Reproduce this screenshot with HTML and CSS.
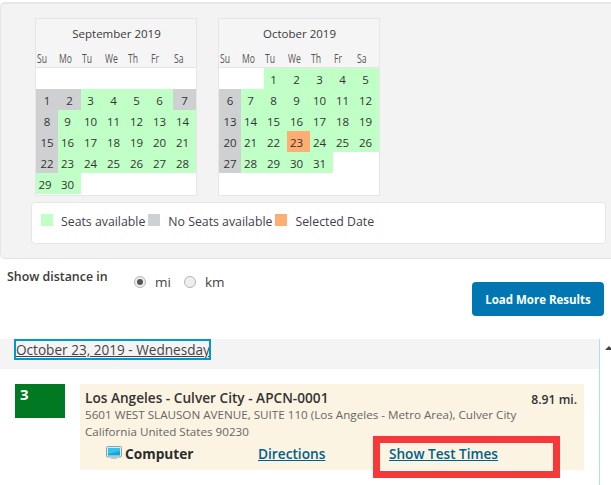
FILE: index.html
```html
<!DOCTYPE html>
<html lang="en">
<head>
<meta charset="utf-8">
<title>Test center results</title>
<link rel="stylesheet" href="styles.css">
</head>
<body>
<section class="panel">
  <div class="calendars">
    <div class="cal">
      <div class="cal-title">September 2019</div>
      <div class="dow"><span>Su</span><span>Mo</span><span>Tu</span><span>We</span><span>Th</span><span>Fr</span><span>Sa</span></div>
      <div class="days">
        <i></i><i></i><i></i><i></i><i></i><i></i><i></i>
        <b class="no">1</b><b class="no">2</b><b class="ok">3</b><b class="ok">4</b><b class="ok">5</b><b class="ok">6</b><b class="no">7</b>
        <b class="no">8</b><b class="ok">9</b><b class="ok">10</b><b class="ok">11</b><b class="ok">12</b><b class="ok">13</b><b class="ok">14</b>
        <b class="no">15</b><b class="ok">16</b><b class="ok">17</b><b class="ok">18</b><b class="ok">19</b><b class="ok">20</b><b class="ok">21</b>
        <b class="no">22</b><b class="ok">23</b><b class="ok">24</b><b class="ok">25</b><b class="ok">26</b><b class="ok">27</b><b class="ok">28</b>
        <b class="ok">29</b><b class="ok">30</b>
      </div>
    </div>
    <div class="cal">
      <div class="cal-title">October 2019</div>
      <div class="dow"><span>Su</span><span>Mo</span><span>Tu</span><span>We</span><span>Th</span><span>Fr</span><span>Sa</span></div>
      <div class="days">
        <i></i><i></i><b class="ok">1</b><b class="ok">2</b><b class="ok">3</b><b class="ok">4</b><b class="ok">5</b>
        <b class="no">6</b><b class="ok">7</b><b class="ok">8</b><b class="ok">9</b><b class="ok">10</b><b class="ok">11</b><b class="ok">12</b>
        <b class="no">13</b><b class="ok">14</b><b class="ok">15</b><b class="ok">16</b><b class="ok">17</b><b class="ok">18</b><b class="ok">19</b>
        <b class="no">20</b><b class="ok">21</b><b class="ok">22</b><b class="sel">23</b><b class="ok">24</b><b class="ok">25</b><b class="ok">26</b>
        <b class="no">27</b><b class="ok">28</b><b class="ok">29</b><b class="ok">30</b><b class="ok">31</b>
      </div>
    </div>
  </div>
  <div class="legend">
    <span class="swatch ok"></span><span class="legend-text">Seats available</span>
    <span class="swatch no"></span><span class="legend-text">No Seats available</span>
    <span class="swatch sel"></span><span class="legend-text">Selected Date</span>
  </div>
</section>

<div class="options">
  <div class="distance-label">Show distance in</div>
  <div class="radios">
    <span class="radio on"></span><span class="radio-text">mi</span>
    <span class="radio"></span><span class="radio-text">km</span>
  </div>
  <button class="load" type="button">Load More Results</button>
</div>

<section class="results">
  <div class="results-main">
    <div class="date-band"><a class="date-link" href="#">October 23, 2019 - Wednesday</a></div>
    <div class="result">
      <div class="rank">3</div>
      <div class="card">
        <div class="card-head">
          <span class="site">Los Angeles - Culver City - APCN-0001</span>
          <span class="miles">8.91 mi.</span>
        </div>
        <div class="addr">5601 WEST SLAUSON AVENUE, SUITE 110 (Los Angeles - Metro Area), Culver City</div>
        <div class="addr">California United States 90230</div>
        <div class="actions">
          <span class="computer">
            <svg class="pc" viewBox="0 0 16 14" width="16" height="14" aria-hidden="true">
              <rect x="0.5" y="0.5" width="15" height="10.5" rx="1" fill="#dfe8ec" stroke="#8aa2ad"/>
              <rect x="2" y="2" width="12" height="7.5" fill="#10a8dc"/>
              <path d="M2 2h12v3L2 8z" fill="#35c3ec"/>
              <path d="M6 11h4l1 2H5z" fill="#b9c6cc"/>
            </svg>Computer</span>
          <a class="act-link directions" href="#">Directions</a>
          <a class="act-link times" href="#">Show Test Times</a>
        </div>
      </div>
    </div>
    <div class="callout"></div>
  </div>
  <div class="scroll"><span class="arrow"></span></div>
</section>
</body>
</html>
```

FILE: styles.css
```css
* { box-sizing: border-box; }
html, body { margin: 0; padding: 0; }
body {
  width: 611px;
  height: 485px;
  overflow: hidden;
  background: #fff;
  color: #333;
  font-family: "Open Sans", "Liberation Sans", sans-serif;
  position: relative;
}
.panel {
  margin-top: 2px;
  height: 257px;
  background: #f3f3f3;
  border-top: 2px solid #e6e6e6;
  border-bottom: 1px solid #e3e3e3;
  border-left: 1px solid #e6e6e6;
  border-radius: 5px 0 0 5px;
  padding: 14px 6px 0 30px;
}
.calendars { display: flex; gap: 21px; padding-left: 4px; }
.cal {
  width: 162px;
  height: 178px;
  background: #fff;
  border: 1px solid #e6e6e6;
}
.cal-title {
  height: 31px;
  background: #f5f5f5;
  text-align: center;
  font-size: 11.5px;
  line-height: 27px;
  padding: 1px 0 0 1px;
  color: #3a3a3a;
}
.dow {
  display: grid;
  grid-template-columns: 22px repeat(6, 23px);
  height: 18px;
  background: #f5f5f5;
  border-bottom: 1px solid #e6e6e6;
  font-size: 12px;
  line-height: 18px;
  color: #555;
}
.dow span {
  padding-left: 1px;
  transform: scaleX(0.72);
  transform-origin: 1px 50%;
}
.days {
  display: grid;
  grid-template-columns: 22px repeat(6, 23px);
  grid-auto-rows: 21px;
}
.days b {
  font-weight: 400;
  font-size: 11.5px;
  line-height: 21px;
  text-align: center;
  color: #333;
  padding-top: 1px;
}
.days .ok, .days .sel { padding-right: 4px; }
.ok { background: #c0ffc6; }
.no { background: #cfd0d2; }
.sel { background: #ffae73; }
.legend {
  margin-top: 6px;
  width: 575px;
  height: 42px;
  background: #fff;
  border: 1px solid #e6e6e6;
  border-radius: 4px;
  display: flex;
  align-items: flex-start;
  padding: 11px 0 0 9px;
  font-size: 12.3px;
  line-height: 17px;
  color: #3f4050;
}
.swatch { width: 12px; height: 12px; flex: none; }
.legend-text { margin: -1px 3px 0 8px; }
.options {
  display: flex;
  align-items: flex-start;
  height: 80px;
  padding: 0 7px;
  position: relative;
}
.distance-label {
  width: 127px;
  padding-top: 9px;
  font-size: 12.4px;
  font-weight: 600;
  line-height: 17px;
  color: #3a3a3a;
}
.radios {
  display: flex;
  align-items: center;
  margin-top: 13px;
  font-size: 13.5px;
  line-height: 18px;
  color: #444;
}
.radio {
  width: 12px;
  height: 12px;
  border-radius: 50%;
  border: 1px solid #b5b5b5;
  background: #eee;
  flex: none;
  display: flex;
  align-items: center;
  justify-content: center;
}
.radio.on::after {
  content: "";
  width: 6px;
  height: 6px;
  border-radius: 50%;
  background: #555;
}
.radio-text { margin: 1px 13px 0 9px; }
.load {
  margin: 23px 0 0 auto;
  width: 132px;
  height: 34px;
  background: #0077b3;
  color: #fff;
  border: 0;
  border-radius: 4px;
  font-family: inherit;
  font-size: 11.5px;
  font-weight: 700;
  padding: 0;
}
.results { display: flex; height: 146px; position: relative; }
.results-main { width: 599px; flex: none; }
.date-band {
  height: 30px;
  background: #f4f4f4;
  padding-left: 14px;
}
.date-link {
  display: inline-block;
  width: 197px;
  height: 21px;
  border: 2px solid #0099cc;
  color: #444;
  font-size: 13.6px;
  line-height: 18px;
  white-space: nowrap;
  overflow: hidden;
}
.result { display: flex; padding: 15px 0 0 15px; }
.rank {
  width: 50px;
  height: 34px;
  background: #007a22;
  color: #fff;
  font-weight: 700;
  font-size: 15px;
  line-height: 20px;
  padding-left: 5px;
  flex: none;
}
.card {
  margin-left: 15px;
  width: 504px;
  height: 86px;
  background: #fbf4e2;
  padding: 5px 7px 0 5px;
}
.card-head { display: flex; justify-content: space-between; height: 17px; }
.site { font-size: 13.65px; font-weight: 600; line-height: 17px; color: #333; }
.miles { font-size: 12.2px; font-weight: 600; line-height: 17px; margin-top: 2px; color: #333; }
.addr { font-size: 11.65px; line-height: 17px; color: #666; white-space: nowrap; }
.actions { display: flex; align-items: center; height: 20px; margin-top: 3px; }
.computer {
  display: flex;
  align-items: center;
  gap: 3px;
  width: 153px;
  padding-left: 21px;
  font-size: 13.7px;
  font-weight: 700;
  color: #2c2c2c;
}
.pc { flex: none; }
.act-link {
  color: #005f8c;
  font-size: 13.7px;
  font-weight: 600;
  text-decoration: underline;
}
.directions { width: 151px; padding-left: 20px; }
.times { font-size: 13.6px; }
.callout {
  position: absolute;
  left: 373px;
  top: 97px;
  width: 187px;
  height: 42px;
  border: 7px solid #f73838;
}
.scroll {
  flex: 1;
  border-left: 1px solid #a8e3ee;
  position: relative;
}
.arrow {
  position: absolute;
  left: 5px;
  top: 7px;
  width: 0;
  height: 0;
  border-left: 4px solid transparent;
  border-right: 4px solid transparent;
  border-bottom: 4px solid #444;
}
```
